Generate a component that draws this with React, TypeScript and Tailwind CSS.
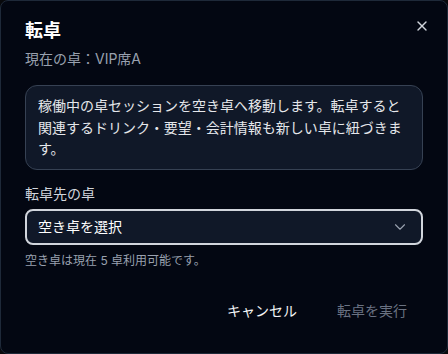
import { X, ChevronDown } from 'lucide-react'

export default function App() {
  return (
    <div
      className="min-h-screen bg-[#08090c]"
      style={{ fontFamily: 'Inter, "Noto Sans CJK JP", sans-serif' }}
    >
      <div className="relative h-[354px] w-[448px] rounded-lg border border-gray-800 bg-gray-950 px-6 pt-4 pb-6 text-gray-100">
        {/* Close */}
        <button className="absolute top-[17px] right-[17px] text-gray-300">
          <X size={16} strokeWidth={2} />
        </button>

        {/* Header */}
        <h2 className="text-lg font-bold leading-7 text-white">転卓</h2>
        <p className="mt-1 text-sm leading-5 text-gray-400">現在の卓：VIP席A</p>

        {/* Info */}
        <div className="mt-4 rounded-xl border border-gray-700 bg-gray-900 px-3 py-[9px] text-sm leading-[21.5px] text-gray-200">
          稼働中の卓セッションを空き卓へ移動します。転卓すると関連するドリンク・要望・会計情報も新しい卓に紐づきます。
        </div>

        {/* Target table */}
        <label className="mt-[14px] block text-sm leading-5 text-gray-300">転卓先の卓</label>
        <button className="mt-[5px] flex h-9 w-full items-center justify-between rounded-lg border-2 border-gray-300 bg-gray-900 pl-[11px] pr-3 text-sm text-white">
          <span>空き卓を選択</span>
          <ChevronDown size={18} strokeWidth={1.5} className="text-gray-400" />
        </button>
        <p className="mt-2 text-xs leading-4 text-gray-400">空き卓は現在 5 卓利用可能です。</p>

        {/* Actions */}
        <div className="mt-6 flex justify-end gap-2">
          <button className="h-9 rounded-md px-4 text-sm text-gray-100">キャンセル</button>
          <button className="h-9 rounded-md px-4 text-sm text-gray-500" disabled>
            転卓を実行
          </button>
        </div>
      </div>
    </div>
  )
}
